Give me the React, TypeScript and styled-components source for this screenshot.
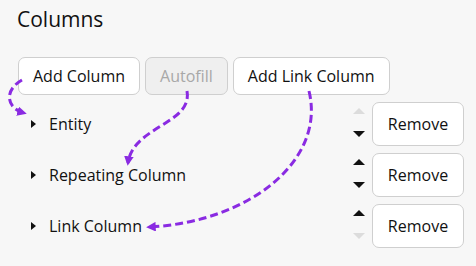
import styled, { createGlobalStyle } from "styled-components";

const GlobalStyle = createGlobalStyle`
    html, body {
        margin: 0;
        padding: 0;
        background: #f7f7f7;
    }
    body {
        font-family: "Open Sans", "Noto Sans", sans-serif;
        color: #111;
    }
`;

const Page = styled.div`
    position: relative;
    width: 476px;
    height: 266px;
    padding: 0 12px 0 18px;
    box-sizing: border-box;
    overflow: hidden;
`;

const Title = styled.h2`
    margin: 0 0 0 -1px;
    padding-top: 5px;
    font-size: 21px;
    font-weight: 400;
    line-height: 29px;
`;

const Toolbar = styled.div`
    display: flex;
    gap: 5px;
    margin-top: 23px;
`;

const Button = styled.button<{ disabled?: boolean }>`
    font-family: inherit;
    font-size: 16px;
    height: 38px;
    padding: 0 14px;
    border: 1px solid #cfcfcf;
    border-radius: 7px;
    background: ${(p) => (p.disabled ? "#efefef" : "#fff")};
    color: ${(p) => (p.disabled ? "#a8a8a8" : "#111")};
    cursor: pointer;
`;

const List = styled.div`
    display: flex;
    flex-direction: column;
    gap: 7px;
    margin-top: 7px;
`;

const Row = styled.div`
    display: flex;
    align-items: center;
    height: 44px;
`;

const Label = styled.div`
    flex: 1;
    display: flex;
    align-items: center;
    gap: 13px;
    padding-left: 13px;
    font-size: 16px;
`;

const Caret = styled.span`
    width: 0;
    height: 0;
    border-top: 4.5px solid transparent;
    border-bottom: 4.5px solid transparent;
    border-left: 5px solid #111;
`;

const Spinner = styled.div`
    display: flex;
    flex-direction: column;
    justify-content: space-between;
    height: 44px;
    padding: 6px 0 9px;
    box-sizing: border-box;
    margin-right: 7px;
`;

const Tri = styled.span<{ dir: "up" | "down"; off?: boolean }>`
    width: 0;
    height: 0;
    border-left: 6.5px solid transparent;
    border-right: 6.5px solid transparent;
    ${(p) => (p.dir === "up" ? "border-bottom" : "border-top")}: 6px solid
        ${(p) => (p.off ? "#dcdcdc" : "#111")};
`;

const RemoveButton = styled(Button)`
    height: 44px;
    width: 92px;
    padding: 0;
`;

const Overlay = styled.svg`
    position: absolute;
    left: 0;
    top: 0;
    pointer-events: none;
`;

const rows = [
    { name: "Entity", first: true, last: false },
    { name: "Repeating Column", first: false, last: false },
    { name: "Link Column", first: false, last: true },
];

const purple = "#8a2be2";

export default function App() {
    return (
        <>
            <GlobalStyle />
            <Page>
                <Title>Columns</Title>
                <Toolbar>
                    <Button>Add Column</Button>
                    <Button disabled>Autofill</Button>
                    <Button>Add Link Column</Button>
                </Toolbar>
                <List>
                    {rows.map((r) => (
                        <Row key={r.name}>
                            <Label>
                                <Caret />
                                {r.name}
                            </Label>
                            <Spinner>
                                <Tri dir="up" off={r.first} />
                                <Tri dir="down" off={r.last} />
                            </Spinner>
                            <RemoveButton>Remove</RemoveButton>
                        </Row>
                    ))}
                </List>
                <Overlay width="476" height="266" viewBox="0 0 476 266">
                    <defs>
                        <marker id="head" viewBox="0 0 10 10" refX="7" refY="5"
                            markerWidth="3.2" markerHeight="3.2" orient="auto-start-reverse">
                            <path d="M0,0 L10,5 L0,10 z" fill={purple} />
                        </marker>
                    </defs>
                    <g fill="none" stroke={purple} strokeWidth="3" strokeDasharray="8 4">
                        <path d="M22,80 C4,90 6,108 24,113" markerEnd="url(#head)" />
                        <path d="M187,91 C193,124 133,126 128,163" markerEnd="url(#head)" />
                        <path d="M309,91 C326,160 250,222 149,227" markerEnd="url(#head)" />
                    </g>
                </Overlay>
            </Page>
        </>
    );
}
